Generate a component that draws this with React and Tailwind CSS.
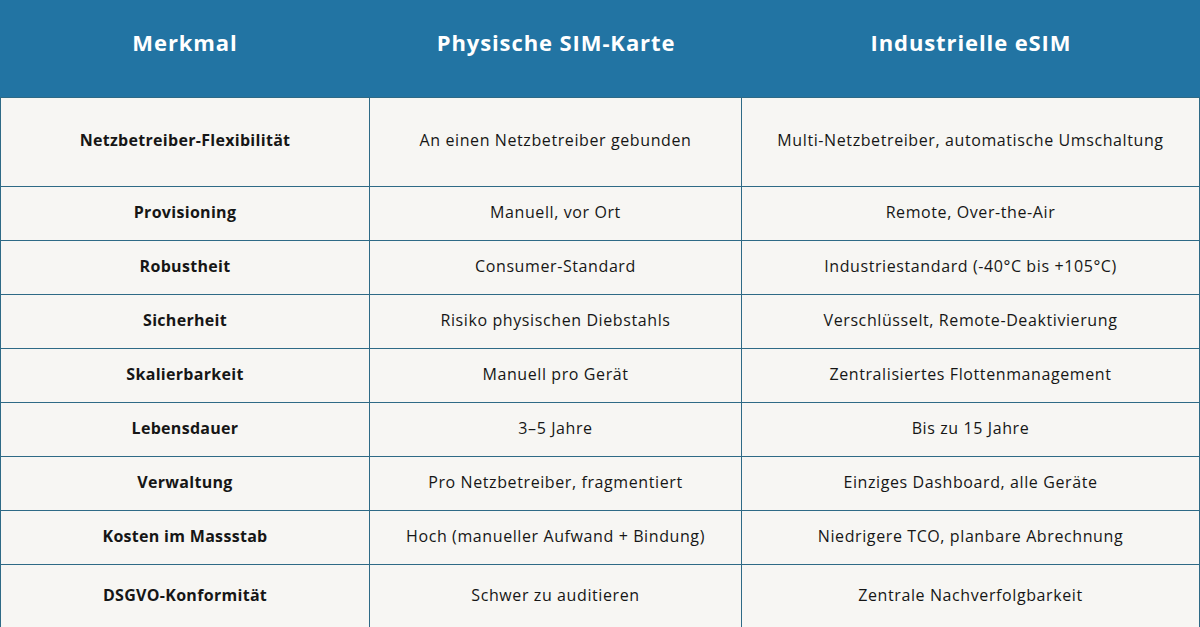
const rows = [
  ['Netzbetreiber-Flexibilität', 'An einen Netzbetreiber gebunden', 'Multi-Netzbetreiber, automatische Umschaltung', 'h-[89px]'],
  ['Provisioning', 'Manuell, vor Ort', 'Remote, Over-the-Air', 'h-[54px]'],
  ['Robustheit', 'Consumer-Standard', 'Industriestandard (-40°C bis +105°C)', 'h-[54px]'],
  ['Sicherheit', 'Risiko physischen Diebstahls', 'Verschlüsselt, Remote-Deaktivierung', 'h-[54px]'],
  ['Skalierbarkeit', 'Manuell pro Gerät', 'Zentralisiertes Flottenmanagement', 'h-[54px]'],
  ['Lebensdauer', '3–5 Jahre', 'Bis zu 15 Jahre', 'h-[54px]'],
  ['Verwaltung', 'Pro Netzbetreiber, fragmentiert', 'Einziges Dashboard, alle Geräte', 'h-[54px]'],
  ['Kosten im Massstab', 'Hoch (manueller Aufwand + Bindung)', 'Niedrigere TCO, planbare Abrechnung', 'h-[54px]'],
  ['DSGVO-Konformität', 'Schwer zu auditieren', 'Zentrale Nachverfolgbarkeit', 'h-[63px]'],
];

export default function App() {
  return (
    <div className="w-[1200px] h-[627px] overflow-hidden bg-[#f7f6f3] font-['Open_Sans',sans-serif] text-[#161616]">
      <div className="grid grid-cols-[370px_372px_458px] h-[98px] bg-[#2274a3] border-b border-[#2e6a86] text-white text-[22px] font-bold tracking-[0.9px]">
        <div className="flex items-center justify-center pb-[12px]">Merkmal</div>
        <div className="flex items-center justify-center pb-[12px]">Physische SIM-Karte</div>
        <div className="flex items-center justify-center pb-[12px]">Industrielle eSIM</div>
      </div>
      <div className="border-x border-b border-[#2e6a86]">
        {rows.map(([a, b, c, h], i) => (
          <div
            key={a}
            className={`grid grid-cols-[369px_372px_457px] ${h} ${i < rows.length - 1 ? 'border-b border-[#2e6a86]' : ''}`}
          >
            <div className="flex items-center justify-center pb-[4px] text-[16px] font-bold tracking-[0.3px] border-r border-[#2e6a86]">{a}</div>
            <div className="flex items-center justify-center pb-[4px] text-[16px] tracking-[0.6px] border-r border-[#2e6a86]">{b}</div>
            <div className="flex items-center justify-center pb-[4px] text-[16px] tracking-[0.6px]">{c}</div>
          </div>
        ))}
      </div>
    </div>
  );
}
